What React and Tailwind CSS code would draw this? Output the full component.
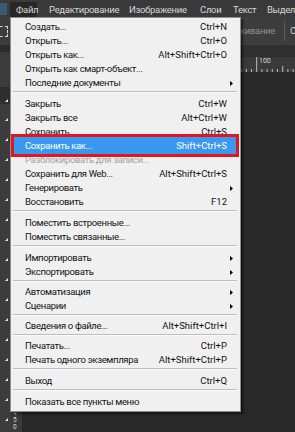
import React from "react";

const groups = [
  {
    sep: 7,
    items: [
      { label: "Создать...", shortcut: "Ctrl+N" },
      { label: "Открыть...", shortcut: "Ctrl+O" },
      { label: "Открыть как...", shortcut: "Alt+Shift+Ctrl+O" },
      { label: "Открыть как смарт-объект..." },
      { label: "Последние документы", arrow: true },
    ],
  },
  {
    sep: 7,
    items: [
      { label: "Закрыть", shortcut: "Ctrl+W" },
      { label: "Закрыть все", shortcut: "Alt+Ctrl+W" },
      { label: "Сохранить", shortcut: "Ctrl+S" },
      { label: "Сохранить как...", shortcut: "Shift+Ctrl+S", active: true },
      { label: "Разблокировать для записи...", disabled: true },
      { label: "Сохранить для Web...", shortcut: "Alt+Shift+Ctrl+S" },
      { label: "Генерировать", arrow: true },
      { label: "Восстановить", shortcut: "F12" },
    ],
  },
  {
    sep: 7,
    items: [
      { label: "Поместить встроенные..." },
      { label: "Поместить связанные..." },
    ],
  },
  {
    sep: 6,
    items: [
      { label: "Импортировать", arrow: true },
      { label: "Экспортировать", arrow: true },
    ],
  },
  {
    sep: 6,
    items: [
      { label: "Автоматизация", arrow: true },
      { label: "Сценарии", arrow: true },
    ],
  },
  {
    sep: 6,
    items: [{ label: "Сведения о файле...", shortcut: "Alt+Shift+Ctrl+I" }],
  },
  {
    sep: 7,
    items: [
      { label: "Печатать...", shortcut: "Ctrl+P" },
      { label: "Печать одного экземпляра", shortcut: "Alt+Shift+Ctrl+P" },
    ],
  },
  {
    sep: 7,
    items: [{ label: "Выход", shortcut: "Ctrl+Q" }],
  },
  {
    sep: 0,
    items: [{ label: "Показать все пункты меню" }],
  },
];

function Arrow() {
  return (
    <svg width="3" height="5" viewBox="0 0 3 5" className="mr-[-6px]">
      <polygon points="0,0 3,2.5 0,5" fill="#000" />
    </svg>
  );
}

function Item({ label, shortcut, arrow, disabled, active }) {
  let cls =
    "flex h-[14px] items-center justify-between whitespace-nowrap leading-[14px] pl-[14px] pr-[13px] text-[#141414]";
  if (active)
    cls =
      "flex h-[14px] items-center justify-between whitespace-nowrap leading-[14px] mx-[2px] pl-[12px] pr-[11px] bg-[#3b98ef] text-white shadow-[0_-2px_0_#3b98ef,0_1px_0_#3b98ef]";
  if (disabled)
    cls =
      "flex h-[14px] items-center justify-between whitespace-nowrap leading-[14px] pl-[14px] pr-[13px] text-[#a2a2a2]";
  return (
    <div className={cls}>
      <span className="tracking-[-0.35px]">{label}</span>
      {shortcut ? <span>{shortcut}</span> : arrow ? <Arrow /> : null}
    </div>
  );
}

function Separator({ h }) {
  return (
    <div className={h === 7 ? "h-[7px] pt-[1px] pl-[2px] pr-[3px]" : "h-[6px] pt-[1px] pl-[2px] pr-[3px]"}>
      <div className="h-px bg-[#bdbdbd]" />
      <div className="h-px bg-[#fbfbfb]" />
    </div>
  );
}

function ToolMark() {
  return (
    <div className="flex h-[20px] items-end justify-end pr-[2px] pb-[3px]">
      <svg width="3" height="3" viewBox="0 0 3 3">
        <polygon points="3,0 3,3 0,3" fill="#e6e6e6" />
      </svg>
    </div>
  );
}

function HRuler() {
  const ticks = [];
  for (let i = -45; i <= 12; i++) {
    const x = 234.7 + i * 5.2;
    const h = i % 10 === 0 ? 15 : i % 5 === 0 ? 6 : 3;
    ticks.push(<line key={i} x1={x} x2={x} y1={15 - h} y2={15} stroke="#bdbdbd" strokeWidth="1" />);
  }
  return (
    <svg width="273" height="15" viewBox="0 0 273 15" className="absolute left-0 top-0">
      {ticks}
    </svg>
  );
}

export default function App() {
  return (
    <div className="relative h-[432px] w-[295px] overflow-hidden bg-[#282828] font-['Roboto',sans-serif] text-[9.5px]">
      {/* menu bar */}
      <div className="flex h-[17px] overflow-hidden whitespace-nowrap bg-[#3a3a3a] text-[9.5px] tracking-[-0.3px] text-[#d6d6d6]">
        <div className="flex h-[17px] w-[10px] shrink-0 items-center">
          <div className="h-[12px] w-[7px] rounded-r-[1px] bg-[#3d5873]" />
        </div>
        <div className="mt-[2px] h-[15px] w-[27px] shrink-0 bg-[#272727] pl-[6px] leading-[15px]">Файл</div>
        <div className="mt-[2px] h-[15px] w-[85px] shrink-0 pl-[12px] leading-[15px]">Редактирование</div>
        <div className="mt-[2px] h-[15px] w-[71px] shrink-0 pl-[7px] leading-[15px]">Изображение</div>
        <div className="mt-[2px] h-[15px] w-[33px] shrink-0 pl-[7px] leading-[15px]">Слои</div>
        <div className="mt-[2px] h-[15px] w-[34px] shrink-0 pl-[7px] leading-[15px]">Текст</div>
        <div className="mt-[2px] h-[15px] shrink-0 pl-[7px] leading-[15px]">Выделение</div>
      </div>

      {/* options bar */}
      <div className="flex h-[28px] items-center overflow-hidden whitespace-nowrap bg-[#3d3d3d] tracking-[-0.3px]">
        <div className="h-[28px] w-[10px] shrink-0 overflow-hidden pt-[9px]">
          <div className="ml-[-6px] h-[11px] w-[14px] border border-dashed border-[#d8d8d8]" />
        </div>
        <div className="flex w-[265px] shrink-0 items-center justify-end text-[#8e8e8e]">
          <span>Сглаживание</span>
        </div>
        <div className="ml-[9px] h-[20px] w-px shrink-0 bg-[#5c5c5c]" />
        <span className="ml-[5px] shrink-0 text-[#d0d0d0]">Стиль:</span>
      </div>

      {/* body */}
      <div className="flex h-[387px]">
        <div className="flex w-[10px] shrink-0 flex-col bg-[#3c3c3c]">
          <div className="h-[7px] bg-[#2b2b2b]" />
          <div className="h-[35px]" />
          <div className="h-[17px] bg-[#2e2e2e]">
            <div className="flex h-full items-end justify-end pr-[2px] pb-[2px]">
              <svg width="3" height="3" viewBox="0 0 3 3">
                <polygon points="3,0 3,3 0,3" fill="#e6e6e6" />
              </svg>
            </div>
          </div>
          {Array.from({ length: 16 }).map((_, i) => (
            <ToolMark key={i} />
          ))}
        </div>
        <div className="flex flex-1 flex-col">
          <div className="h-[12px] bg-[#2f2f2f]" />
          <div className="flex h-[15px]">
            <div className="w-[12px] bg-[#3a3a3a]" />
            <div className="relative flex-1 bg-[#3a3a3a]">
              <HRuler />
              <span className="absolute left-[237px] top-[0px] text-[7px] leading-[9px] text-[#d8d8d8]">100</span>
            </div>
          </div>
          <div className="flex flex-1">
            <div className="flex w-[12px] flex-col items-start bg-[#3a3a3a] pl-[3px] pt-[337px] text-[6.5px] leading-[7px] text-[#dcdcdc]">
              <div className="h-px w-[9px] bg-[#bdbdbd]" />
              <span>4</span>
              <span>5</span>
              <span>0</span>
            </div>
            <div className="flex-1 bg-[#282828]" />
          </div>
        </div>
      </div>

      {/* File menu dropdown */}
      <div className="absolute left-[10px] top-[17px] w-[231px] border border-[#8f8f8f] bg-[#f0f0f0] pt-[2px] pb-[2px] shadow-[2px_2px_2px_rgba(0,0,0,0.55)]">
        {groups.map((g, gi) => (
          <div key={gi}>
            {g.items.map((it) => (
              <Item key={it.label} {...it} />
            ))}
            {g.sep ? <Separator h={g.sep} /> : null}
          </div>
        ))}
      </div>

      {/* red annotation frame */}
      <div className="absolute left-[11px] top-[134px] h-[23px] w-[228px] border-[3px] border-[#e2161c]" />
    </div>
  );
}
